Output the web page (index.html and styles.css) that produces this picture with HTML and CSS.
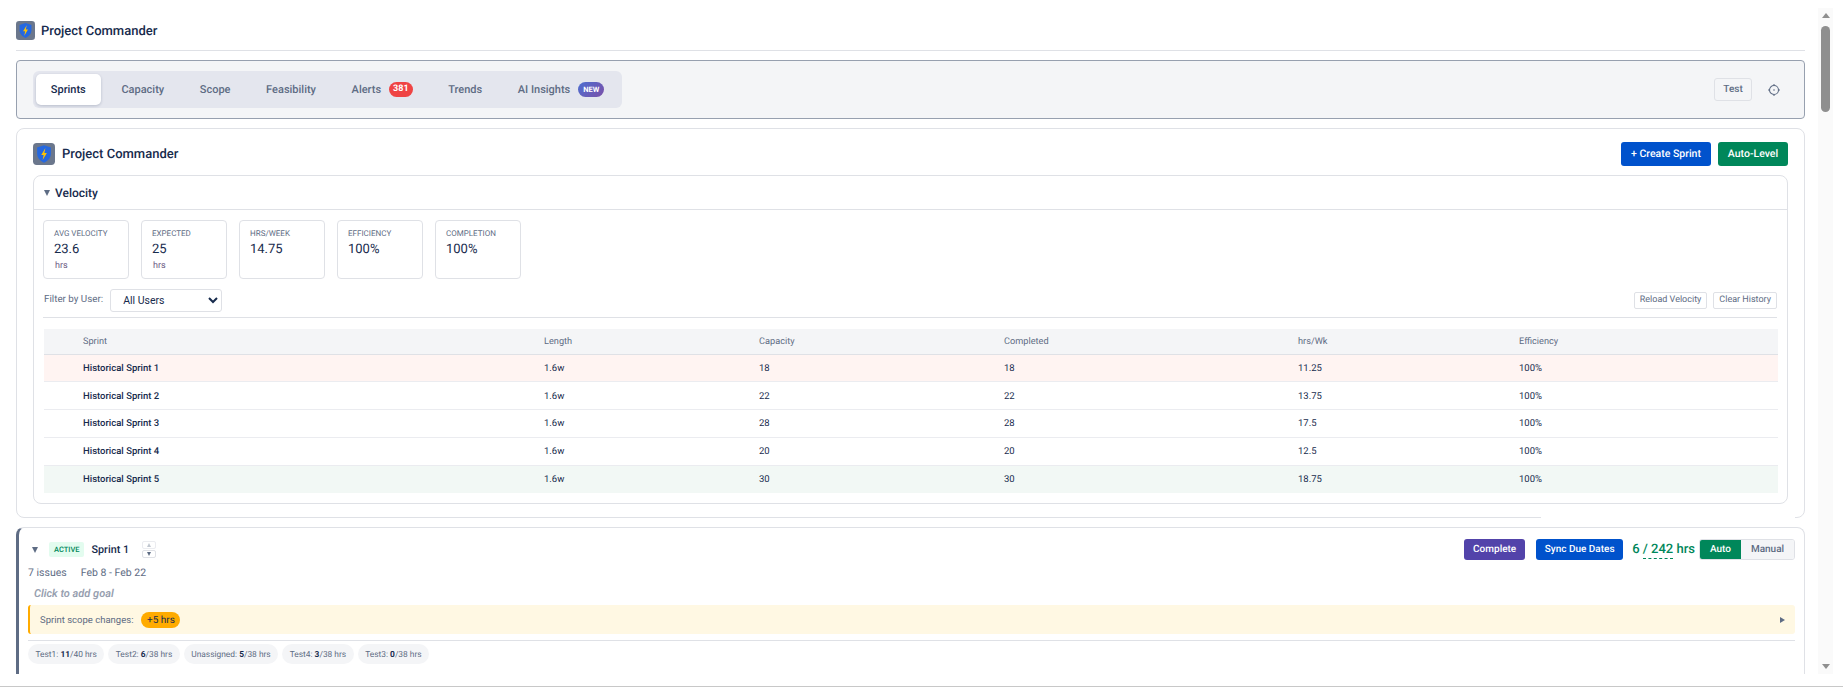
FILE: index.html
```html
<!DOCTYPE html>
<html lang="en">
<head>
<meta charset="utf-8">
<title>Project Commander</title>
<link rel="stylesheet" href="styles.css">
</head>
<body>
<div class="frame">
  <div class="viewport">
    <div class="content">
      <header class="page-head">
        <svg class="logo logo-sm" viewBox="0 0 24 24"><rect width="24" height="24" rx="4" fill="#6b778c"/><path d="M12 2.500l7.500 2.500v6.500c0 4.500-3 8-7.500 10-4.500-2-7.500-5.500-7.500-10V5z" fill="#2568e0"/><path d="M13.500 5.500l-4.500 7.500h2.600l-1.100 5.500 4.600-7.700h-2.700z" fill="#ffc400"/></svg>
        <span class="page-title">Project Commander</span>
      </header>
      <nav class="tabbar">
        <div class="tabs">
          <span class="tab active">Sprints</span>
          <span class="tab">Capacity</span>
          <span class="tab">Scope</span>
          <span class="tab">Feasibility</span>
          <span class="tab">Alerts<b class="count">381</b></span>
          <span class="tab">Trends</span>
          <span class="tab">AI Insights<b class="new">NEW</b></span>
        </div>
        <div class="tab-tools">
          <span class="test-btn">Test</span>
          <svg class="gear" viewBox="0 0 14 14"><circle cx="7" cy="7" r="4.500" fill="none" stroke="#5e6c84" stroke-width="1.100"/><circle cx="7" cy="7" r=".8" fill="#5e6c84"/><path d="M7 1v1.500M7 11.500V13M1 7h1.500M11.500 7H13" stroke="#5e6c84" stroke-width="1.100"/></svg>
        </div>
      </nav>
      <section class="main-card">
        <div class="main-head">
          <svg class="logo logo-lg" viewBox="0 0 24 24"><rect width="24" height="24" rx="4" fill="#6b778c"/><path d="M12 2.500l7.500 2.500v6.500c0 4.500-3 8-7.500 10-4.500-2-7.500-5.500-7.500-10V5z" fill="#2568e0"/><path d="M13.500 5.500l-4.500 7.500h2.600l-1.100 5.500 4.600-7.700h-2.700z" fill="#ffc400"/></svg>
          <span class="main-title">Project Commander</span>
          <span class="btn blue create">+ Create Sprint</span>
          <span class="btn green level">Auto-Level</span>
        </div>
        <div class="velocity">
          <div class="vel-head"><i class="tri-down"></i><span>Velocity</span></div>
          <div class="vel-body">
            <div class="stats">
              <div class="stat"><div class="stat-label">AVG VELOCITY</div><div class="stat-value">23.6</div><div class="stat-unit">hrs</div></div>
              <div class="stat"><div class="stat-label">EXPECTED</div><div class="stat-value">25</div><div class="stat-unit">hrs</div></div>
              <div class="stat"><div class="stat-label">HRS/WEEK</div><div class="stat-value">14.75</div></div>
              <div class="stat"><div class="stat-label">EFFICIENCY</div><div class="stat-value">100%</div></div>
              <div class="stat"><div class="stat-label">COMPLETION</div><div class="stat-value">100%</div></div>
            </div>
            <div class="filter">
              <label class="filter-label" for="user">Filter by User:</label>
              <select class="filter-select" id="user"><option>All Users</option></select>
              <span class="ghost reload">Reload Velocity</span>
              <span class="ghost">Clear History</span>
            </div>
            <table class="vel-table">
              <thead>
                <tr><th>Sprint</th><th>Length</th><th>Capacity</th><th>Completed</th><th>hrs/Wk</th><th>Efficiency</th></tr>
              </thead>
              <tbody>
                <tr class="low"><td>Historical Sprint 1</td><td>1.6w</td><td>18</td><td>18</td><td>11.25</td><td>100%</td></tr>
                <tr><td>Historical Sprint 2</td><td>1.6w</td><td>22</td><td>22</td><td>13.75</td><td>100%</td></tr>
                <tr><td>Historical Sprint 3</td><td>1.6w</td><td>28</td><td>28</td><td>17.5</td><td>100%</td></tr>
                <tr><td>Historical Sprint 4</td><td>1.6w</td><td>20</td><td>20</td><td>12.5</td><td>100%</td></tr>
                <tr class="high"><td>Historical Sprint 5</td><td>1.6w</td><td>30</td><td>30</td><td>18.75</td><td>100%</td></tr>
              </tbody>
            </table>
          </div>
        </div>
        <div class="border-gap"></div>
      </section>
      <section class="sprint">
        <div class="sprint-head">
          <i class="tri-down sprint-tri"></i>
          <span class="active-badge">ACTIVE</span>
          <span class="sprint-name">Sprint 1</span>
          <span class="order"><span class="up"><i></i></span><span class="down"><i></i></span></span>
          <span class="btn purple complete">Complete</span>
          <span class="btn blue sync">Sync Due Dates</span>
          <span class="hours">6 <span class="hours-num">/ 242</span> hrs</span>
          <span class="toggle"><span class="on">Auto</span><span class="off">Manual</span></span>
        </div>
        <div class="sprint-meta"><span>7 issues</span><span>Feb 8 - Feb 22</span></div>
        <div class="goal">Click to add goal</div>
        <div class="scope"><span>Sprint scope changes:</span><b class="scope-pill">+5 hrs</b><i class="tri-right"></i></div>
        <div class="chips">
          <span class="chip">Test1: <b>11</b>/40 hrs</span>
          <span class="chip">Test2: <b>6</b>/38 hrs</span>
          <span class="chip">Unassigned: <b>5</b>/38 hrs</span>
          <span class="chip">Test4: <b>3</b>/38 hrs</span>
          <span class="chip">Test3: <b>0</b>/38 hrs</span>
        </div>
      </section>
    </div>
    <div class="scrollbar" aria-hidden="true">
      <i class="sb-up"></i>
      <div class="sb-track"><div class="sb-thumb"></div></div>
      <i class="sb-down"></i>
    </div>
  </div>
</div>
</body>
</html>
```
FILE: styles.css
```css
* { box-sizing: border-box; }
html, body { margin: 0; height: 690px; overflow: hidden; background: #fff; }
body { font-family: Roboto, "Noto Sans", sans-serif; color: #172b4d; font-size: 11px; text-rendering: geometricPrecision; }
.frame { height: 687px; border-bottom: 1px solid #c8c8c8; }
.viewport { display: flex; height: 674px; overflow: hidden; }
.content { width: 1805px; padding: 0 0 0 16px; flex: none; }

.page-head { display: flex; align-items: center; height: 51px; padding: 20px 0 9px; border-bottom: 1px solid #dfe1e6; gap: 6px; }
.logo { flex: none; display: block; }
.logo-sm { width: 19px; height: 19px; }
.logo-lg { width: 22px; height: 22px; }
.page-title { font-size: 13px; font-weight: 500; padding-top: 2px; }

.tabbar { display: flex; align-items: center; height: 59px; margin-top: 9px; padding: 0 23px 0 16px; background: #f4f5f7; border: 1px solid #97a0af; border-radius: 4px; }
.tabs { display: flex; align-items: center; gap: 6px; height: 37px; padding: 0 3px; background: #e4e6ee; border-radius: 6px; }
.tab { display: flex; align-items: center; height: 31px; padding: 0 14.800px; border-radius: 5px; font-size: 11px; font-weight: 500; color: #5e6c84; white-space: nowrap; }
.tab.active { background: #fff; color: #172b4d; box-shadow: 0 1px 3px rgba(9, 30, 66, .2); }
.count { margin-left: 8px; padding: 0 4px; height: 15px; line-height: 15px; border-radius: 8px; background: #ef4444; color: #fff; font-size: 9px; font-weight: 700; }
.new { margin-left: 8px; padding: 0 5px; height: 15px; line-height: 15px; border-radius: 8px; background: linear-gradient(135deg, #4c6fd1, #7b4fa8); color: #fff; font-size: 7.500px; font-weight: 700; }
.tab-tools { display: flex; align-items: center; margin-left: auto; gap: 15px; }
.test-btn { display: flex; align-items: center; justify-content: center; width: 38px; height: 23px; border: 1px solid #dfe1e6; border-radius: 3px; font-size: 10px; font-weight: 500; color: #5e6c84; }
.gear { width: 14px; height: 14px; display: block; }

.main-card { position: relative; height: 390px; margin-top: 9px; padding: 0 16px; border: 1px solid #dfe1e6; border-radius: 8px; }
.main-head { display: flex; align-items: center; height: 46px; padding-top: 3px; }
.main-title { margin-left: 7px; padding-top: 2px; font-size: 13px; font-weight: 500; margin-right: auto; }
.btn { display: flex; align-items: center; justify-content: center; height: 24px; border-radius: 3px; color: #fff; font-size: 10.500px; font-weight: 500; white-space: nowrap; }
.blue { background: #0052cc; }
.green { background: #00875a; }
.purple { background: #5243aa; }
.create { width: 90px; }
.level { width: 70px; margin-left: 7px; }
.border-gap { position: absolute; right: 9px; bottom: -1px; width: 254px; height: 3px; background: #fff; }

.velocity { height: 329px; border: 1px solid #dfe1e6; border-radius: 8px; }
.vel-head { display: flex; align-items: center; gap: 5px; height: 34px; padding-left: 10px; border-bottom: 1px solid #dfe1e6; font-size: 12px; font-weight: 500; }
.tri-down { display: block; width: 0; height: 0; border-left: 3px solid transparent; border-right: 3px solid transparent; border-top: 6px solid #5e6c84; flex: none; }
.vel-body { padding: 10px 10px 0 9px; }
.stats { display: flex; gap: 12px; }
.stat { width: 86px; height: 59px; padding: 7px 10px; border: 1px solid #dfe1e6; border-radius: 4px; }
.stat-label { font-size: 8px; line-height: 11px; color: #5e6c84; }
.stat-value { font-size: 13px; line-height: 18px; margin-top: 2px; font-weight: 400; }
.stat-unit { font-size: 9px; line-height: 12px; margin: 1px 0 0 1px; color: #6b5b84; }

.filter { display: flex; align-items: center; height: 30px; margin-top: 9px; padding: 0 0 5px 1px; border-bottom: 1px solid #dfe1e6; }
.filter-label { font-size: 9.800px; color: #5e6c84; margin-top: -2px; }
.filter-select { width: 112px; height: 23px; margin: 0 auto 0 7px; padding: 0 6px 0 8px; border: 1px solid #dfe1e6; border-radius: 3px; background: #fff; font: 400 10.500px Roboto, sans-serif; color: #172b4d; }
.ghost { display: flex; align-items: center; height: 17px; padding: 0 5px; border: 1px solid #dfe1e6; border-radius: 2px; font-size: 9px; color: #5e6c84; white-space: nowrap; }
.reload { margin-right: 6px; }

.vel-table { width: 1734px; margin: 11px 0 0 1px; border-collapse: collapse; table-layout: fixed; font-size: 9.500px; }
.vel-table th { height: 25px; padding: 0; background: #f4f5f7; border-bottom: 1px solid #dfe1e6; text-align: left; font-weight: 400; font-size: 9.200px; color: #5e6c84; }
.vel-table td { height: 27.800px; padding: 1px 0 0; border-bottom: 1px solid #ebecf0; }
.vel-table th:nth-child(1) { width: 500px; }
.vel-table th:nth-child(2) { width: 215px; }
.vel-table th:nth-child(3) { width: 245px; }
.vel-table th:nth-child(4) { width: 294px; }
.vel-table th:nth-child(5) { width: 221px; }
.vel-table th:nth-child(1), .vel-table td:nth-child(1) { padding-left: 39px; }
.vel-table td:first-child { font-weight: 500; }
.vel-table tr:last-child td { border-bottom: 0; }
.low td { background: #fff4f2; }
.high td { background: #f2f8f5; }

.sprint { margin-top: 9px; height: 170px; padding: 10px 9px 0 9px; border: 1px solid #dfe1e6; border-left: 3px solid #5e6c84; border-radius: 8px 8px 0 0; border-bottom: 0; }
.sprint-head { display: flex; align-items: center; height: 23px; }
.sprint-tri { margin-left: 4px; }
.active-badge { display: flex; align-items: center; height: 15px; margin-left: 11px; padding: 0 5px; background: #e3fcef; border-radius: 2px; color: #00875a; font-size: 7.500px; font-weight: 500; }
.sprint-name { margin-left: 7px; font-size: 10.800px; font-weight: 500; }
.order { display: flex; flex-direction: column; gap: 1px; margin: 0 auto 0 13px; width: 14px; }
.order span { display: flex; align-items: center; justify-content: center; height: 8px; border: 1px solid #dfe1e6; border-radius: 2px; }
.order .up { border-color: #ebecf0; }
.order i { display: block; width: 0; height: 0; border-left: 2.500px solid transparent; border-right: 2.500px solid transparent; }
.order .up i { border-bottom: 4px solid #c1c7d0; }
.order .down i { border-top: 4px solid #5e6c84; }
.sprint-head .btn { height: 21px; font-size: 10px; }
.complete { width: 61px; }
.sync { width: 87px; margin-left: 11px; }
.hours { margin-left: 9px; font-size: 13px; font-weight: 500; color: #00875a; white-space: nowrap; }
.hours-num { border-bottom: 1px dashed #00875a; line-height: 17px; display: inline-block; }
.toggle { display: flex; width: 96px; height: 21px; margin-left: 4px; border: 1px solid #dfe1e6; border-radius: 3px; overflow: hidden; font-size: 10px; font-weight: 500; }
.on { display: flex; align-items: center; justify-content: center; width: 41px; background: #00875a; color: #fff; }
.off { display: flex; align-items: center; justify-content: center; flex: 1; background: #f4f5f7; color: #5e6c84; }
.sprint-meta { display: flex; gap: 14px; margin-top: 5px; line-height: 14px; font-size: 10.500px; color: #5e6c84; }
.goal { margin: 7px 0 0 6px; line-height: 14px; font-size: 11px; font-style: italic; font-weight: 600; color: #97a0af; }
.scope { display: flex; align-items: center; height: 29px; margin-top: 4px; padding: 1px 10px 0; background: #fff8e3; border-left: 2px solid #ffab00; border-radius: 3px; font-size: 9.500px; color: #5e6c84; }
.scope-pill { display: flex; align-items: center; justify-content: center; width: 39px; height: 16px; margin-left: 8px; background: #ffab00; border-radius: 8px; color: #172b4d; font-size: 10px; font-weight: 400; }
.tri-right { margin-left: auto; width: 0; height: 0; border-top: 3px solid transparent; border-bottom: 3px solid transparent; border-left: 5px solid #5e6c84; }
.chips { display: flex; gap: 4px; margin-top: 6px; padding-top: 3px; border-top: 1px solid #dfe1e6; }
.chip { display: flex; align-items: center; height: 20px; padding: 1px 7.500px 0; background: #f4f5f7; border-radius: 10px; font-size: 8.400px; color: #5e6c84; white-space: pre; }
.chip b { color: #172b4d; font-weight: 700; }

.scrollbar { display: flex; flex-direction: column; align-items: center; width: 15px; height: 666px; margin: 8px 0 0 13px; background: #fafafa; flex: none; }
.sb-up, .sb-down { display: block; width: 0; height: 0; border-left: 4.500px solid transparent; border-right: 4.500px solid transparent; flex: none; }
.sb-up { margin-top: 5px; border-bottom: 5px solid #8f8f8f; }
.sb-down { margin-bottom: 5px; border-top: 5px solid #8f8f8f; }
.sb-track { flex: 1; width: 9px; padding-top: 8px; }
.sb-thumb { height: 86px; background: #8f8f8f; border-radius: 5px; }
```
